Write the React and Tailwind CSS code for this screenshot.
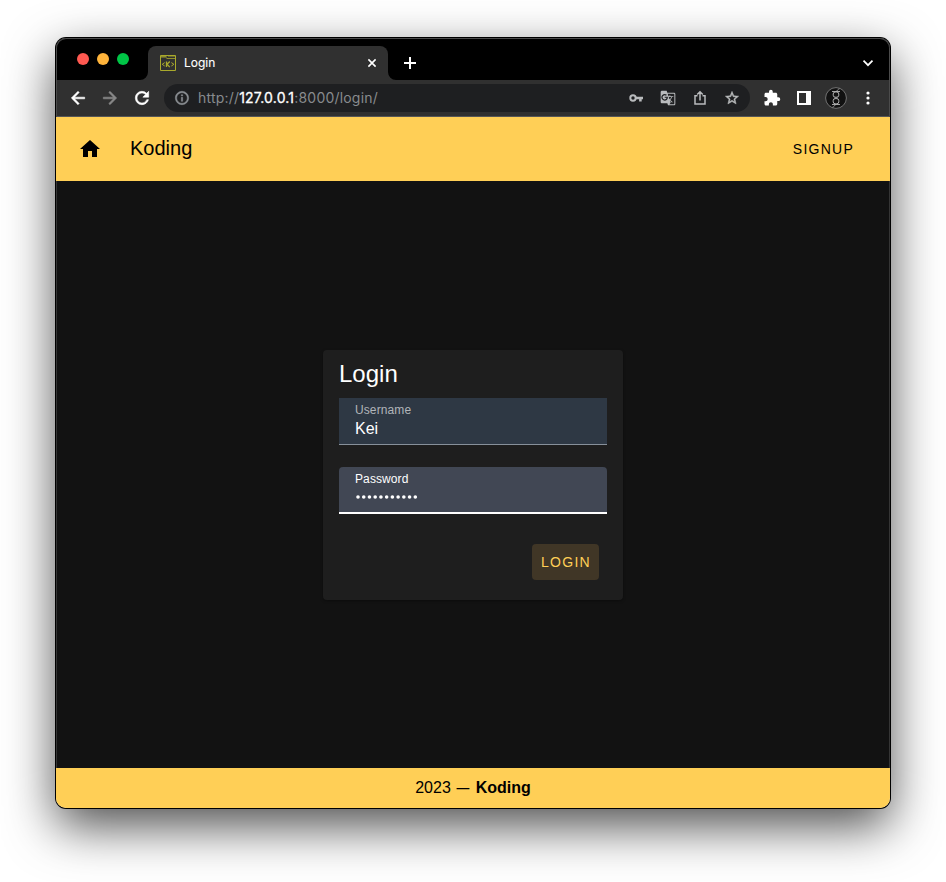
import React from "react";
import { MdExtension, MdGTranslate } from "react-icons/md";

function Cell({ children }) {
  return <div className="flex h-8 w-8 shrink-0 items-center justify-center">{children}</div>;
}

function Glyph({ size, d, className }) {
  return (
    <svg width={size} height={size} viewBox="0 0 24 24" fill="currentColor" stroke="currentColor" strokeWidth="0.7" className={className}>
      <path d={d} />
    </svg>
  );
}

const BACK = "M20 11H7.83l5.59-5.59L12 4l-8 8 8 8 1.41-1.41L7.83 13H20v-2z";
const FORWARD = "M12 4l-1.41 1.41L16.17 11H4v2h12.17l-5.58 5.59L12 20l8-8z";
const RELOAD = "M17.65 6.35A7.958 7.958 0 0 0 12 4c-4.42 0-7.99 3.58-7.99 8s3.57 8 7.99 8c3.73 0 6.84-2.55 7.73-6h-2.08A5.99 5.99 0 0 1 12 18c-3.31 0-6-2.69-6-6s2.69-6 6-6c1.66 0 3.14.69 4.22 1.78L13 11h7V4l-2.35 2.35z";
const INFO = "M11 7h2v2h-2zm0 4h2v6h-2zm1-9C6.48 2 2 6.48 2 12s4.48 10 10 10 10-4.48 10-10S17.52 2 12 2zm0 18c-4.41 0-8-3.59-8-8s3.59-8 8-8 8 3.59 8 8-3.59 8-8 8z";
const STAR = "M22 9.24l-7.19-.62L12 2 9.19 8.63 2 9.24l5.46 4.73L5.82 21 12 17.27 18.18 21l-1.63-7.03L22 9.24zM12 15.4l-3.76 2.27 1-4.28-3.32-2.88 4.38-.38L12 6.1l1.71 4.04 4.38.38-3.32 2.88 1 4.28L12 15.4z";

function Favicon() {
  return (
    <svg width="16" height="16" viewBox="0 0 16 16" fill="none" stroke="#a9a92c">
      <path d="M.5.5h15v15H.5z" />
      <path d="M1 1.5h5.5M6.5 3.5H15" opacity=".8" />
      <path d="M1 2.5h6M8 1.5h7" opacity=".45" />
      <path d="M4.7 7.6 2.2 9.3l2.5 1.7M11.4 7.6l2.5 1.7-2.5 1.7" />
      <path d="M6.5 6.5v5.6M9.8 6.5 7 9.3l2.8 2.8" strokeWidth="1.3" />
    </svg>
  );
}

function TabStrip() {
  return (
    <div className="flex h-[42px] items-end bg-black text-white">
      <div className="flex h-[42px] w-[84px] items-center gap-2 pl-[21px]">
        <span className="h-3 w-3 rounded-full bg-[#ff5951]" />
        <span className="h-3 w-3 rounded-full bg-[#ffb43b]" />
        <span className="h-3 w-3 rounded-full bg-[#00c546]" />
      </div>
      <svg className="ml-auto shrink-0" width="8" height="8" viewBox="0 0 8 8">
        <path d="M8 0v8H0A8 8 0 0 0 8 0Z" fill="#303030" />
      </svg>
      <div className="flex h-[34px] w-[240px] items-center rounded-t-lg bg-[#303030] pl-3 pr-[11px] font-['Inter',sans-serif] text-[12px] [-webkit-text-stroke:0.1px_white]">
        <Favicon />
        <span className="ml-2">Login</span>
        <svg className="ml-auto" width="10" height="10" viewBox="0 0 10 10" stroke="white" strokeWidth="1.6">
          <path d="m1.4 1.4 7.2 7.2M8.6 1.4 1.4 8.6" />
        </svg>
      </div>
      <svg className="shrink-0" width="8" height="8" viewBox="0 0 8 8">
        <path d="M0 0v8h8A8 8 0 0 1 0 0Z" fill="#303030" />
      </svg>
      <div className="flex h-[34px] w-[494px] items-center justify-between pl-2 pr-4">
        <svg width="12" height="12" viewBox="0 0 12 12" stroke="white" strokeWidth="2"><path d="M6 0v12M0 6h12" /></svg>
        <svg width="12" height="8" viewBox="0 0 12 8" stroke="white" strokeWidth="1.7" fill="none"><path d="m1.5 1.7 4.5 4.5 4.5-4.5" /></svg>
      </div>
    </div>
  );
}

function Toolbar() {
  return (
    <div className="flex h-[37px] items-center border-b border-[#555657] bg-[#303030] px-1.5 text-white">
      <Cell><Glyph size={20} d={BACK} /></Cell>
      <Cell><Glyph size={20} d={FORWARD} className="text-[#888888]" /></Cell>
      <Cell><Glyph size={20} d={RELOAD} /></Cell>
      <div className="mx-1.5 flex h-7 w-[586px] items-center rounded-full bg-[#1e1f21] px-0.5 text-[#b9bbbd]">
        <Cell><Glyph size={16} d={INFO} className="text-[#8d9196]" /></Cell>
        <div className="whitespace-nowrap font-['Inter',sans-serif] text-[14px] leading-5 tracking-[0.2px] text-[#888b8e]">
          http://<span className="text-white [-webkit-text-stroke:0.3px_white]">127.0.0.1</span>:8000/login/
        </div>
        <div className="ml-auto flex items-center">
          <Cell>
            <svg width="14" height="10" viewBox="0 0 14 10" fill="none" stroke="currentColor" strokeWidth="2">
              <circle cx="4" cy="5" r="2.7" />
              <path d="M6.5 5H14M11.4 5v3.6" strokeWidth="2.6" />
            </svg>
          </Cell>
          <Cell><MdGTranslate size={16} /></Cell>
          <Cell>
            <svg width="14" height="16" viewBox="0 0 14 16" fill="none" stroke="currentColor" strokeWidth="1.5">
              <path d="M4.5 5.8H2v8.2h10V5.8H9.5M7 10.5V2M4.2 4.5 7 1.7l2.8 2.8" />
            </svg>
          </Cell>
          <Cell><Glyph size={16} d={STAR} /></Cell>
        </div>
      </div>
      <Cell><MdExtension size={18} /></Cell>
      <Cell>
        <svg width="14" height="14" viewBox="0 0 14 14"><path fill="white" fillRule="evenodd" d="M0 0h14v14H0ZM2 2v10h7V2Z" /></svg>
      </Cell>
      <Cell>
        <svg width="22" height="22" viewBox="0 0 22 22" fill="none" stroke="#b5b5b5">
          <circle cx="11" cy="11" r="10.4" fill="#111111" stroke="#858585" strokeWidth=".8" />
          <path d="M7 4.5h8M7 17.5h8" strokeWidth=".9" />
          <rect x="8.2" y="5" width="5.6" height="5.2" rx="2" strokeWidth="1" />
          <rect x="8.2" y="11.6" width="5.6" height="5.2" rx="2" strokeWidth="1" />
          <path d="M9.5 10.9h3M7.5 20.2c1.5-.5 2.5-1.5 3-3.2M11.5 5c.4-1.7 1.4-2.6 3-3.2" strokeWidth=".8" />
        </svg>
      </Cell>
      <Cell>
        <svg width="4" height="14" viewBox="0 0 4 14" fill="white">
          <circle cx="2" cy="2" r="1.6" /><circle cx="2" cy="7" r="1.6" /><circle cx="2" cy="12" r="1.6" />
        </svg>
      </Cell>
    </div>
  );
}

function LoginCard() {
  return (
    <form className="h-[250px] w-[300px] rounded bg-[#1e1e1e] px-4 text-white shadow-[0_1px_3px_rgba(0,0,0,0.35)]">
      <h1 className="flex h-12 items-center text-[24px] leading-8">Login</h1>
      <div className="h-[47px] border-b border-[#87909a] bg-[#2e3844] px-4 pt-1">
        <div className="text-[12px] leading-4 tracking-[0.1px] text-[#b1b5b9]">Username</div>
        <div className="pt-px text-[16px] leading-5">Kei</div>
      </div>
      <div className="mt-[22px] h-[47px] rounded-t-sm border-b-2 border-white bg-[#414754] px-4 pt-1">
        <div className="text-[12px] leading-4 tracking-[0.1px]">Password</div>
        <svg className="mt-2" width="64" height="4" viewBox="0 0 64 4" fill="white">
          {Array.from({ length: 11 }, (_, i) => (
            <circle key={i} cx={3 + i * 5.73} cy="2" r="1.8" />
          ))}
        </svg>
      </div>
      <div className="mt-[30px] flex justify-end pr-2">
        <button type="button" className="h-9 w-[67px] rounded bg-[#403626] pl-px pt-0.5 text-center text-[14px] tracking-[1.25px] text-[#ffcf56]">LOGIN</button>
      </div>
    </form>
  );
}

export default function App() {
  return (
    <div className="h-[882px] w-[946px] overflow-hidden bg-white pl-14 pt-[38px] font-['Liberation_Sans',Arial,sans-serif]">
      <div className="h-[770px] w-[834px] rounded-[10px] shadow-[0_0_0_1px_#000,0_18px_50px_rgba(0,0,0,0.7)]">
        <div className="relative flex h-full flex-col overflow-hidden rounded-[10px]">
          <TabStrip />
          <Toolbar />
          <header className="flex h-16 items-center bg-[#ffcf56] pl-[22px] pr-9 text-black">
            <svg width="24" height="24" viewBox="0 0 24 24"><path d="M10 20v-6h4v6h5v-8h3L12 3 2 12h3v8Z" /></svg>
            <span className="ml-7 pb-0.5 text-[20px] leading-8">Koding</span>
            <span className="ml-auto text-[14px] tracking-[1.25px]">SIGNUP</span>
          </header>
          <main className="flex flex-1 items-center justify-center border-x border-[#353535] bg-[#121212]">
            <LoginCard />
          </main>
          <footer className="flex h-10 items-center justify-center bg-[#ffcf56] text-[16px] text-black">
            <span>2023 <span className="inline-block w-4 origin-left scale-x-[0.8] translate-x-[1.5px]">—</span> <strong>Koding</strong></span>
          </footer>
          <div className="pointer-events-none absolute inset-x-0 top-0 h-[79px] rounded-t-[10px] border-x border-t border-[#4b4b4b]" />
        </div>
      </div>
    </div>
  );
}
